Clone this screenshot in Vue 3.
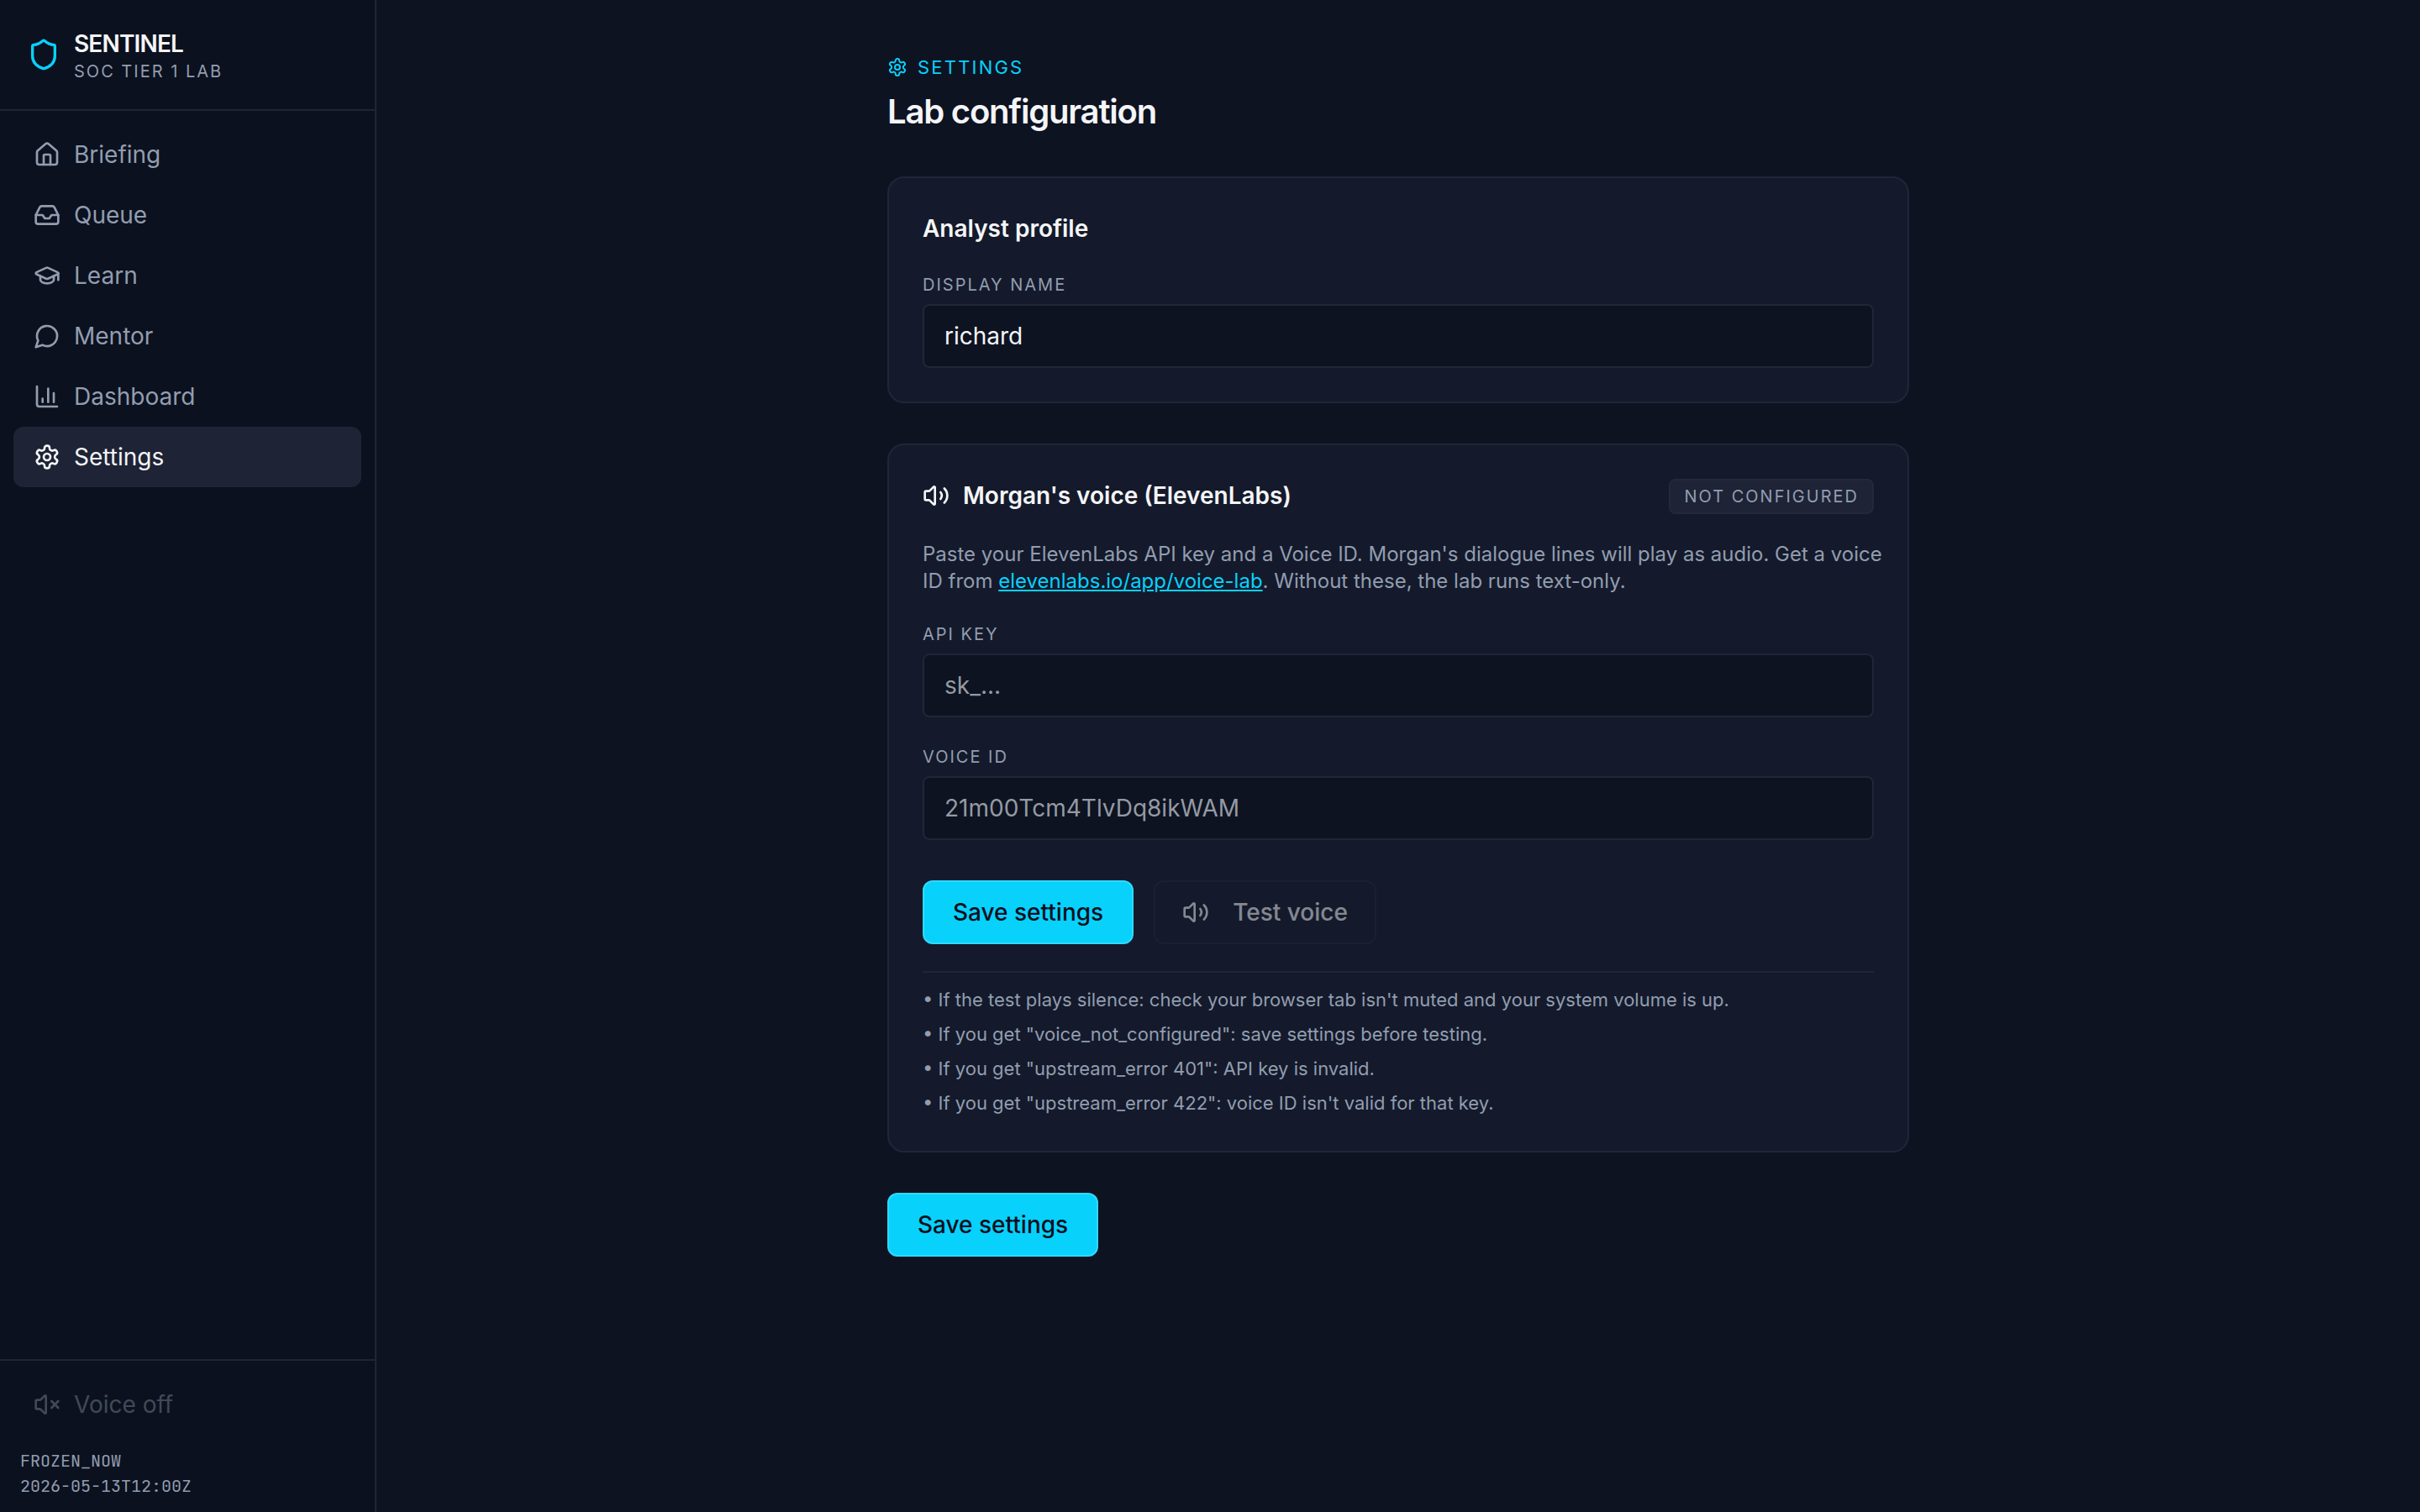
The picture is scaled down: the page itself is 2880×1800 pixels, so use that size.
<template>
  <div class="layout">
    <aside class="sidebar">
      <div class="brand">
        <svg class="icon brand-icon" viewBox="0 0 24 24">
          <path v-for="d in icons.shield" :key="d" :d="d" />
        </svg>
        <div>
          <div class="brand-name">SENTINEL</div>
          <div class="brand-sub">SOC TIER 1 LAB</div>
        </div>
      </div>

      <nav class="nav">
        <a
          v-for="item in navItems"
          :key="item.label"
          href="#"
          class="nav-item"
          :class="{ active: item.label === current }"
          @click.prevent="current = item.label"
        >
          <svg class="icon" viewBox="0 0 24 24">
            <path v-for="d in icons[item.icon]" :key="d" :d="d" />
          </svg>
          {{ item.label }}
        </a>
      </nav>

      <div class="sidebar-footer">
        <button type="button" class="nav-item voice-toggle" disabled>
          <svg class="icon" viewBox="0 0 24 24">
            <path v-for="d in icons.volumeOff" :key="d" :d="d" />
          </svg>
          Voice off
        </button>
        <div class="clock">
          <div>FROZEN_NOW</div>
          <div>2026-05-13T12:00Z</div>
        </div>
      </div>
    </aside>

    <main class="main">
      <form class="content" @submit.prevent>
        <header>
          <div class="eyebrow">
            <svg class="icon eyebrow-icon" viewBox="0 0 24 24">
              <path v-for="d in icons.settings" :key="d" :d="d" />
            </svg>
            SETTINGS
          </div>
          <h1 class="page-title">Lab configuration</h1>
        </header>

        <section class="card">
          <h2 class="card-title">Analyst profile</h2>
          <div class="field">
            <label for="display-name">DISPLAY NAME</label>
            <input id="display-name" v-model="displayName" type="text" />
          </div>
        </section>

        <section class="card">
          <div class="card-head">
            <h2 class="card-title">
              <svg class="icon" viewBox="0 0 24 24">
                <path v-for="d in icons.volume" :key="d" :d="d" />
              </svg>
              Morgan's voice (ElevenLabs)
            </h2>
            <span class="badge">NOT CONFIGURED</span>
          </div>

          <p class="hint">
            Paste your ElevenLabs API key and a Voice ID. Morgan's dialogue lines will play as
            audio. Get a voice ID from <a href="#">elevenlabs.io/app/voice-lab</a>. Without these,
            the lab runs text-only.
          </p>

          <div class="field">
            <label for="api-key">API KEY</label>
            <input id="api-key" v-model="apiKey" type="password" placeholder="sk_..." />
          </div>
          <div class="field">
            <label for="voice-id">VOICE ID</label>
            <input id="voice-id" v-model="voiceId" type="text" placeholder="21m00Tcm4TlvDq8ikWAM" />
          </div>

          <div class="actions">
            <button type="submit" class="btn btn-primary">Save settings</button>
            <button type="button" class="btn btn-ghost" disabled>
              <svg class="icon" viewBox="0 0 24 24">
                <path v-for="d in icons.volume" :key="d" :d="d" />
              </svg>
              Test voice
            </button>
          </div>

          <ul class="tips">
            <li v-for="tip in tips" :key="tip">• {{ tip }}</li>
          </ul>
        </section>

        <div>
          <button type="submit" class="btn btn-primary">Save settings</button>
        </div>
      </form>
    </main>
  </div>
</template>

<script setup>
import { ref } from "vue";

const current = ref("Settings");
const displayName = ref("richard");
const apiKey = ref("");
const voiceId = ref("");

const navItems = [
  { label: "Briefing", icon: "home" },
  { label: "Queue", icon: "inbox" },
  { label: "Learn", icon: "cap" },
  { label: "Mentor", icon: "message" },
  { label: "Dashboard", icon: "chart" },
  { label: "Settings", icon: "settings" },
];

const tips = [
  "If the test plays silence: check your browser tab isn't muted and your system volume is up.",
  'If you get "voice_not_configured": save settings before testing.',
  'If you get "upstream_error 401": API key is invalid.',
  'If you get "upstream_error 422": voice ID isn\'t valid for that key.',
];

const speaker =
  "M11 4.702a.705.705 0 0 0-1.203-.498L6.413 7.587A1.4 1.4 0 0 1 5.416 8H3a1 1 0 0 0-1 1v6a1 1 0 0 0 1 1h2.416a1.4 1.4 0 0 1 .997.413l3.383 3.384A.705.705 0 0 0 11 19.298z";

// 24x24 stroke icons
const icons = {
  shield: [
    "M20 13c0 5-3.5 7.5-7.66 8.95a1 1 0 0 1-.67-.01C7.5 20.5 4 18 4 13V6a1 1 0 0 1 1-1c2 0 4.5-1.2 6.24-2.72a1.17 1.17 0 0 1 1.52 0C14.51 3.81 17 5 19 5a1 1 0 0 1 1 1z",
  ],
  home: [
    "M15 21v-8a1 1 0 0 0-1-1h-4a1 1 0 0 0-1 1v8",
    "M3 10a2 2 0 0 1 .709-1.528l7-5.999a2 2 0 0 1 2.582 0l7 5.999A2 2 0 0 1 21 10v9a2 2 0 0 1-2 2H5a2 2 0 0 1-2-2z",
  ],
  inbox: [
    "M22 12h-6l-2 3h-4l-2-3H2",
    "M5.45 5.11 2 12v6a2 2 0 0 0 2 2h16a2 2 0 0 0 2-2v-6l-3.45-6.89A2 2 0 0 0 16.76 4H7.24a2 2 0 0 0-1.79 1.11z",
  ],
  cap: [
    "M21.42 10.922a1 1 0 0 0-.019-1.838L12.83 5.18a2 2 0 0 0-1.66 0L2.6 9.08a1 1 0 0 0 0 1.832l8.57 3.908a2 2 0 0 0 1.66 0z",
    "M22 10v6",
    "M6 12.5V16a6 3 0 0 0 12 0v-3.5",
  ],
  message: ["M7.9 20A9 9 0 1 0 4 16.1L2 22Z"],
  chart: ["M3 3v16a2 2 0 0 0 2 2h16", "M18 17V9", "M13 17V5", "M8 17v-3"],
  settings: [
    "M12.22 2h-.44a2 2 0 0 0-2 2v.18a2 2 0 0 1-1 1.73l-.43.25a2 2 0 0 1-2 0l-.15-.08a2 2 0 0 0-2.73.73l-.22.38a2 2 0 0 0 .73 2.73l.15.1a2 2 0 0 1 1 1.72v.51a2 2 0 0 1-1 1.74l-.15.09a2 2 0 0 0-.73 2.73l.22.38a2 2 0 0 0 2.73.73l.15-.08a2 2 0 0 1 2 0l.43.25a2 2 0 0 1 1 1.73V20a2 2 0 0 0 2 2h.44a2 2 0 0 0 2-2v-.18a2 2 0 0 1 1-1.73l.43-.25a2 2 0 0 1 2 0l.15.08a2 2 0 0 0 2.73-.73l.22-.39a2 2 0 0 0-.73-2.73l-.15-.08a2 2 0 0 1-1-1.74v-.5a2 2 0 0 1 1-1.74l.15-.09a2 2 0 0 0 .73-2.73l-.22-.38a2 2 0 0 0-2.73-.73l-.15.08a2 2 0 0 1-2 0l-.43-.25a2 2 0 0 1-1-1.73V4a2 2 0 0 0-2-2z",
    "M15 12a3 3 0 1 1-6 0a3 3 0 1 1 6 0z",
  ],
  volume: [speaker, "M16 9a5 5 0 0 1 0 6", "M19.364 18.364a9 9 0 0 0 0-12.728"],
  volumeOff: [speaker, "M22 9l-6 6", "M16 9l6 6"],
};
</script>

<style>
body {
  background: #0d1321;
}
</style>

<style scoped>
.layout {
  display: flex;
  min-height: 100vh;
  background: #0d1321;
  color: #f4f5f7;
  font-family: Inter, "Liberation Sans", sans-serif;
  font-size: 28px;
  line-height: 40px;
}

.icon {
  flex-shrink: 0;
  width: 32px;
  height: 32px;
  fill: none;
  stroke: currentColor;
  stroke-width: 2;
  stroke-linecap: round;
  stroke-linejoin: round;
}

.sidebar {
  display: flex;
  flex-direction: column;
  flex-shrink: 0;
  box-sizing: border-box;
  width: 448px;
  border-right: 2px solid #1f2532;
  background: #0b111e;
}

.brand {
  display: flex;
  align-items: center;
  gap: 16px;
  padding: 32px;
  border-bottom: 2px solid #1f2532;
}

.brand-icon {
  width: 40px;
  height: 40px;
  color: #08d1fc;
}

.brand-name {
  font-weight: 600;
  letter-spacing: -0.03em;
}

.brand-sub {
  color: #929db0;
  font-size: 20px;
  line-height: 26px;
  letter-spacing: 0.1em;
}

.nav {
  flex: 1;
  padding: 16px;
}

.nav-item {
  display: flex;
  align-items: center;
  gap: 16px;
  padding: 16px 24px;
  border-radius: 12px;
  color: #929db0;
  text-decoration: none;
}

.nav-item.active {
  background: #1e2335;
  color: #f4f5f7;
}

.sidebar-footer {
  padding: 16px;
  border-top: 2px solid #1f2532;
}

.voice-toggle {
  width: 100%;
  border: 0;
  background: none;
  font: inherit;
  opacity: 0.4;
}

.clock {
  padding: 16px 8px 0;
  color: #929db0;
  font-family: "JetBrains Mono", "Liberation Mono", monospace;
  font-size: 20px;
  line-height: 30px;
}

.main {
  flex: 1;
  padding: 64px;
}

.content {
  display: flex;
  flex-direction: column;
  gap: 48px;
  max-width: 1216px;
  margin: 0 auto;
}

.eyebrow {
  display: flex;
  align-items: center;
  gap: 12px;
  margin-bottom: 8px;
  color: #08d1fc;
  font-size: 22px;
  line-height: 32px;
  letter-spacing: 0.1em;
}

.eyebrow-icon {
  width: 24px;
  height: 24px;
}

.page-title {
  margin: 0;
  font-size: 40px;
  font-weight: 600;
  line-height: 58px;
  letter-spacing: -0.03em;
}

.card {
  display: flex;
  flex-direction: column;
  gap: 32px;
  padding: 40px;
  border: 2px solid #202637;
  border-radius: 20px;
  background: #141a2b;
}

.card-head {
  display: flex;
  align-items: flex-start;
  justify-content: space-between;
}

.card-title {
  display: flex;
  align-items: center;
  gap: 16px;
  margin: 0;
  font-size: 28px;
  font-weight: 600;
}

.badge {
  padding: 4px 16px;
  border: 2px solid #232939;
  border-radius: 8px;
  background: #1e2335;
  color: #929db0;
  font-size: 20px;
  line-height: 30px;
  letter-spacing: 0.1em;
}

.hint {
  margin: 0 -12px 0 0;
  color: #929db0;
  font-size: 24px;
  line-height: 32px;
}

.hint a {
  color: #08d1fc;
}

.field {
  display: flex;
  flex-direction: column;
  gap: 8px;
}

.field label {
  color: #929db0;
  font-size: 20px;
  line-height: 30px;
  letter-spacing: 0.1em;
}

.field input {
  box-sizing: border-box;
  width: 100%;
  height: 76px;
  padding: 0 24px;
  border: 2px solid #202637;
  border-radius: 8px;
  outline: 0;
  background: #0d1321;
  color: #f4f5f7;
  font: inherit;
}

.field input::placeholder {
  color: #959aa3;
  opacity: 1;
}

.actions {
  display: flex;
  gap: 24px;
  padding-top: 16px;
}

.btn {
  display: inline-flex;
  align-items: center;
  gap: 28px;
  padding: 16px 32px;
  border: 2px solid #202637;
  border-radius: 12px;
  font: inherit;
  font-weight: 500;
}

.btn-primary {
  padding: 16px 34px;
  border-color: #2fdaff;
  background: #08d1fc;
  color: #0a101d;
}

.btn-ghost {
  background: transparent;
  color: #f4f5f7;
  opacity: 0.5;
}

.tips {
  display: flex;
  flex-direction: column;
  gap: 8px;
  margin: 0;
  padding: 16px 0 0;
  border-top: 2px solid #202637;
  color: #929db0;
  font-size: 22px;
  line-height: 33px;
  list-style: none;
}
</style>
